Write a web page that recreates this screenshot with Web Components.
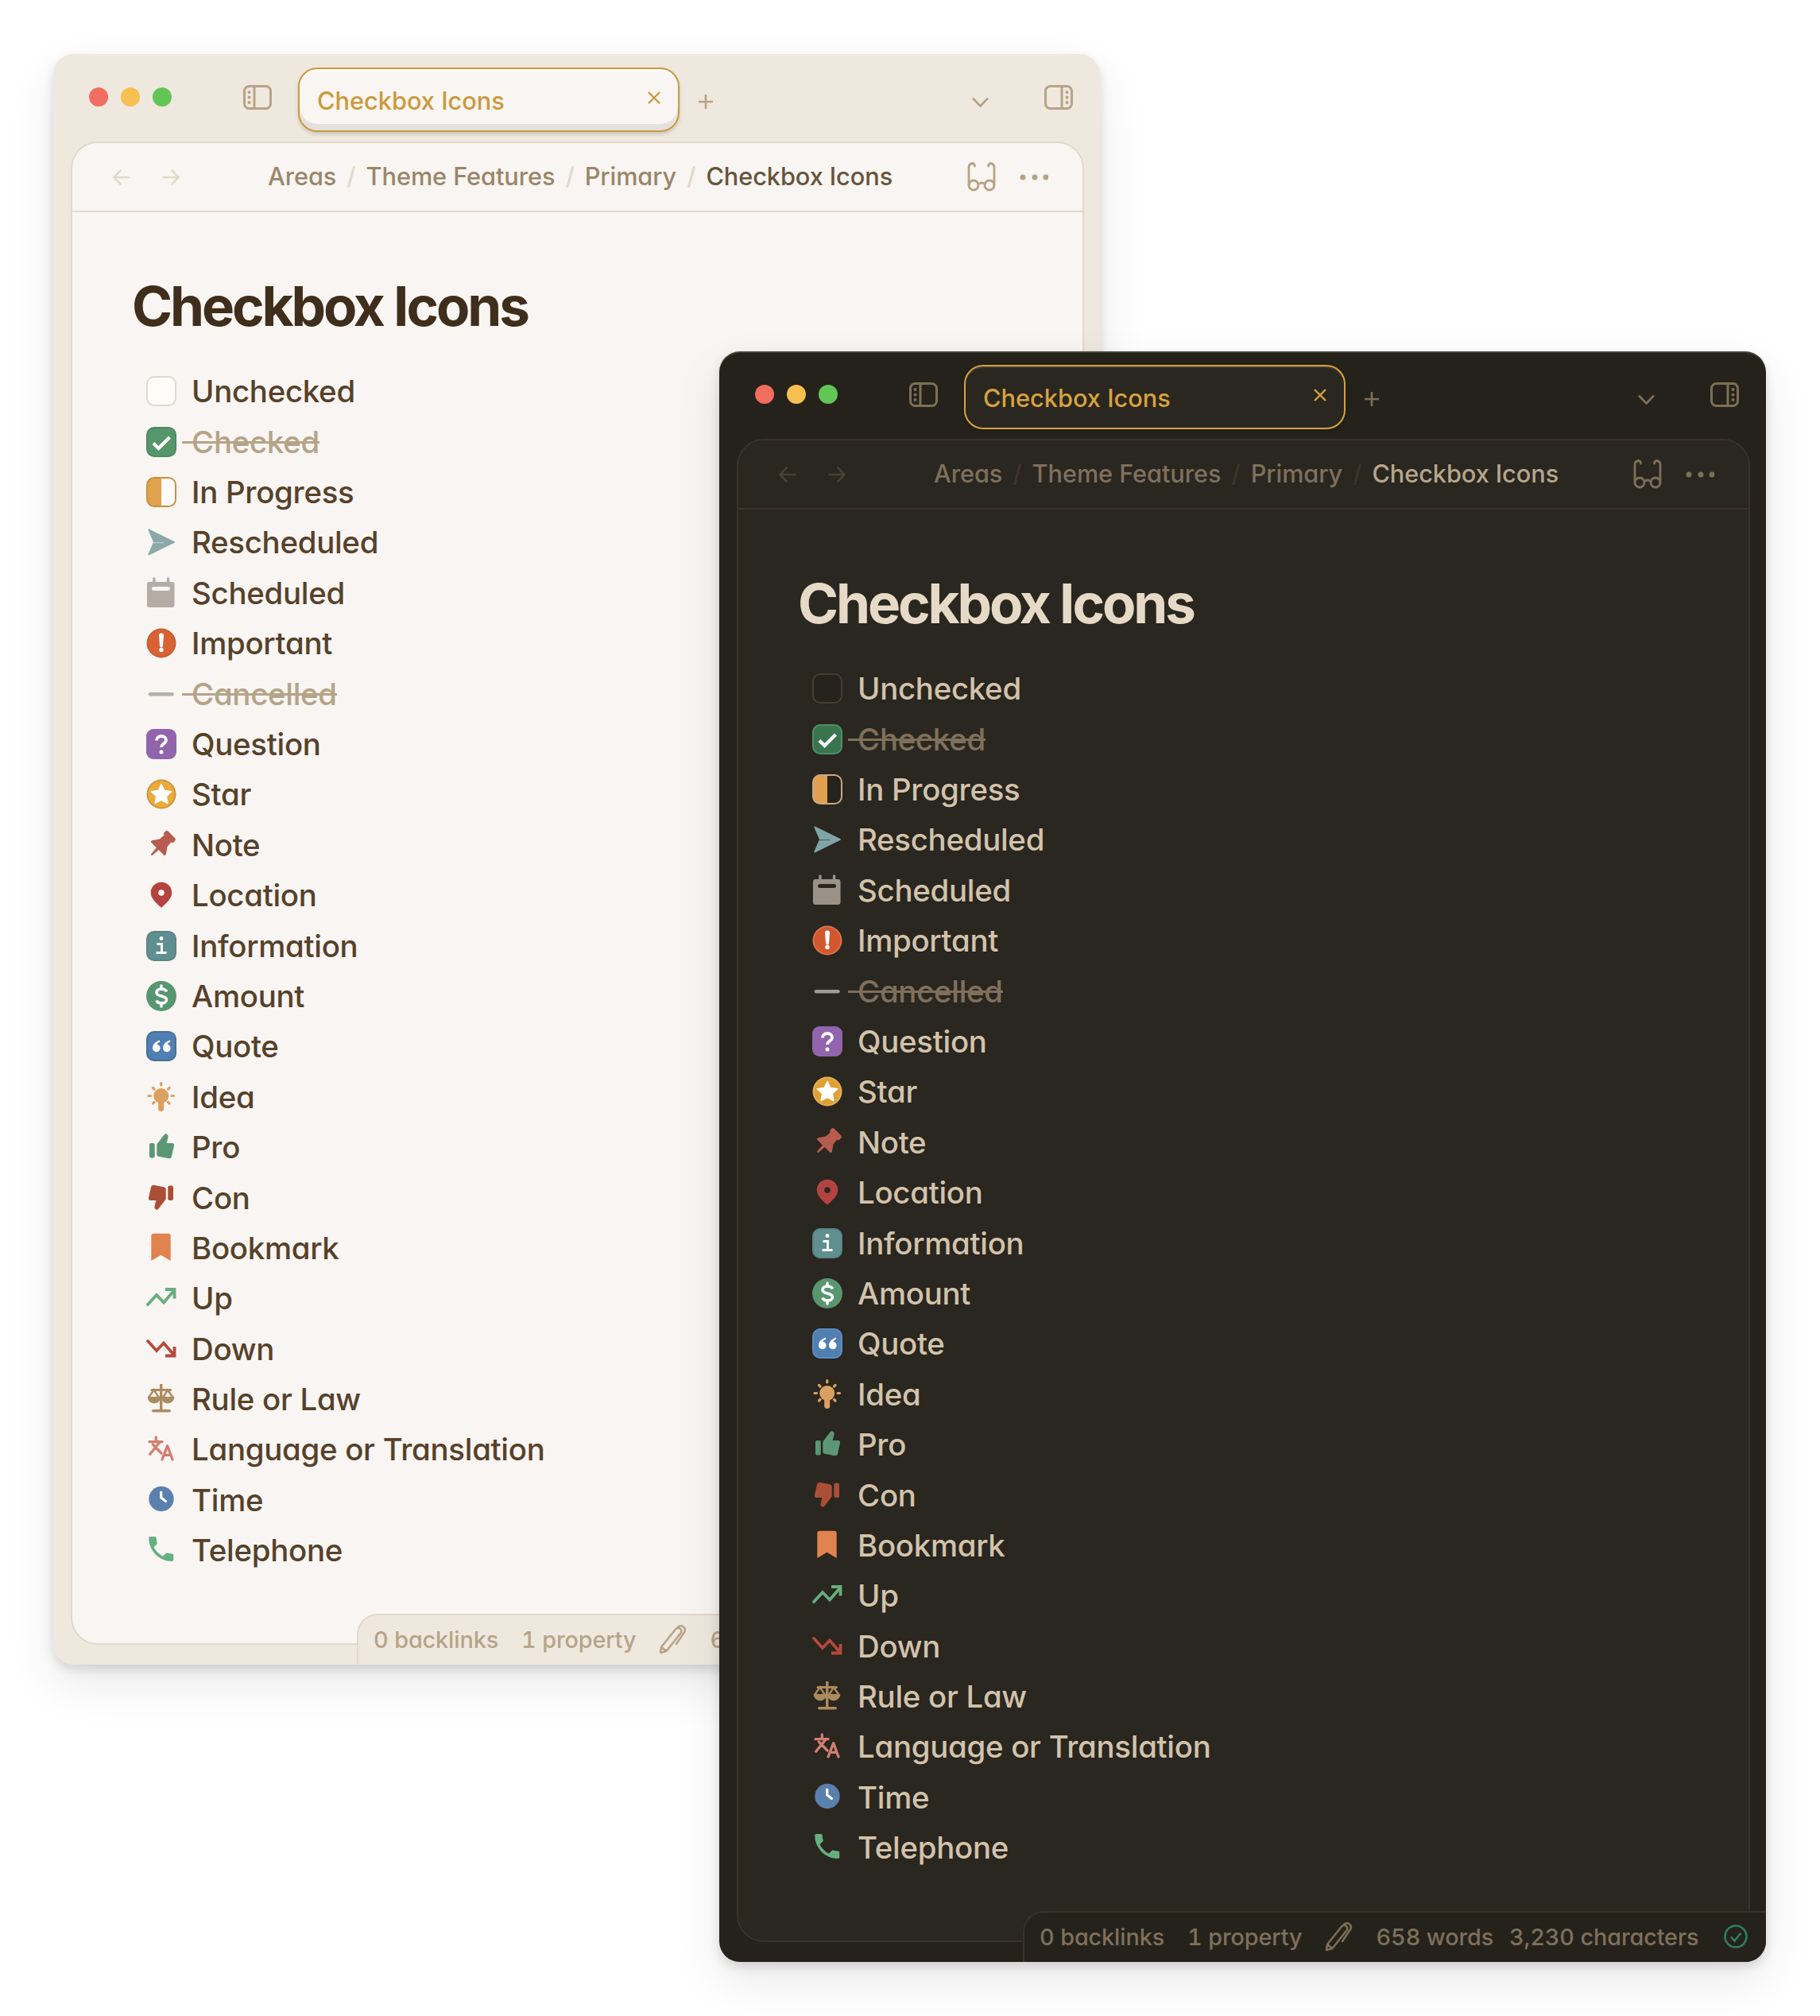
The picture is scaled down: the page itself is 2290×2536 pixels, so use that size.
<!DOCTYPE html>
<html lang="en"><head><meta charset="utf-8"><title>Checkbox Icons</title>
<style>
html,body{margin:0;padding:0;background:#fff}
body{font-family:Inter,"Liberation Sans",sans-serif}
</style></head><body>
<app-desktop>
  <app-window theme="light" style="--x:67px;--y:68px"><note-title>Checkbox Icons</note-title><task-list></task-list></app-window>
  <app-window theme="dark" style="--x:905px;--y:442px"><note-title>Checkbox Icons</note-title><task-list></task-list></app-window>
</app-desktop>
<script>
const U={
side:(flip)=>`<svg width="36" height="31" viewBox="0 0 36 31" fill="none" stroke="currentColor" stroke-width="3"><g ${flip?'transform="matrix(-1 0 0 1 36 0)"':''}><rect x="1.5" y="1.5" width="33" height="28" rx="6"/><path d="M14 1.5v28"/><g fill="currentColor" stroke="none"><circle cx="7.5" cy="9" r="2"/><circle cx="7.5" cy="15.5" r="2"/><circle cx="7.5" cy="22" r="2"/></g></g></svg>`,
close:`<svg width="16" height="16" viewBox="0 0 16 16" fill="none" stroke="currentColor" stroke-width="2.4"><path d="M1 1l14 14M15 1L1 15"/></svg>`,
plus:`<svg width="18" height="18" viewBox="0 0 18 18" fill="none" stroke="currentColor" stroke-width="2.6"><path d="M9 0v18M0 9h18"/></svg>`,
chev:`<svg width="21" height="13" viewBox="0 0 21 13" fill="none" stroke="currentColor" stroke-width="2.6"><path d="M1 1.5l9.5 10 9.5-10"/></svg>`,
back:`<svg width="22" height="20" viewBox="0 0 22 20" fill="none" stroke="currentColor" stroke-width="2.6" stroke-linecap="round" stroke-linejoin="round"><path d="M20.5 10H1.5M9.5 1.5L1.5 10l8 8.5"/></svg>`,
fwd:`<svg width="22" height="20" viewBox="0 0 22 20" fill="none" stroke="currentColor" stroke-width="2.6" stroke-linecap="round" stroke-linejoin="round"><path d="M1.5 10h19M12.5 1.5l8 8.5-8 8.5"/></svg>`,
glasses:`<svg width="36" height="37" viewBox="0 0 36 37" fill="none" stroke="currentColor" stroke-width="2.8" stroke-linecap="round"><circle cx="8" cy="29" r="6"/><circle cx="28" cy="29" r="6"/><path d="M14 27.5q4-3 8 0M2 29V7q0-5 4.5-5.5Q9 1.5 9.5 5M34 29V7q0-5-4.5-5.5Q27 1.5 26.5 5"/></svg>`,
dots:`<svg width="36" height="8" viewBox="0 0 36 8" fill="currentColor"><circle cx="4" cy="4" r="3.5"/><circle cx="19" cy="4" r="3.5"/><circle cx="33" cy="4" r="3.5"/></svg>`,
pencil:`<svg width="36" height="37" viewBox="0 0 36 37" fill="none" stroke="currentColor" stroke-width="2.5" stroke-linejoin="round" stroke-linecap="round"><path d="M2 35l1-7L21 5.5a4 4 0 0 1 6.5 4.8L9.5 33z M3 28l6.5 5M24 2.5q4-2.5 7 0 3 2.8 1.5 6L22 24"/></svg>`,
ok:`<svg width="30" height="30" viewBox="0 0 30 30" fill="none" stroke="#2f7f58" stroke-width="2.6"><circle cx="15" cy="15" r="13.5"/><path d="M9 15.5l4.5 5 8-10"/></svg>`
};
const I={
unchecked:`<rect x="1" y="1" width="36" height="36" rx="9" style="fill:var(--cb-fill);stroke:var(--cb-stroke)" stroke-width="2"/>`,
checked:`<rect x="1" y="1" width="36" height="36" rx="9" style="fill:var(--ok-fill);stroke:var(--ok-stroke)" stroke-width="2"/><path d="M9 20.5l6.5 6.5L29.5 13" fill="none" stroke="#fff" stroke-width="4.2"/>`,
progress:`<rect x="1" y="1" width="36" height="36" rx="9" style="fill:var(--pr-right)"/><path d="M19 1H10a9 9 0 0 0-9 9v18a9 9 0 0 0 9 9h9z" style="fill:var(--pr-fill)"/><rect x="1" y="1" width="36" height="36" rx="9" fill="none" style="stroke:var(--pr-stroke)" stroke-width="2"/>`,
resched:`<path d="M3.5 2.5Q2 2 2.5 4L9 19 2.5 34q-.5 2 1 1.5L35.5 19.7q1-.7 0-1.4z" style="fill:var(--teal)"/><path d="M9 19.6h13" style="stroke:var(--panel)" stroke-width="1.2" opacity=".5"/>`,
sched:`<path d="M8 1a1.8 1.8 0 0 1 3.6 0v4h14.8V1a1.8 1.8 0 0 1 3.6 0v4h3.5a3 3 0 0 1 3 3v26a3 3 0 0 1-3 3H3.5a3 3 0 0 1-3-3V8a3 3 0 0 1 3-3H8z" transform="translate(.5 0) scale(.96 1)" style="fill:var(--cal)"/><rect x="7" y="11" width="23" height="5" rx="2.5" style="fill:var(--panel)"/>`,
important:`<circle cx="19" cy="19" r="18.5" style="fill:var(--imp-b)"/><circle cx="19" cy="19" r="16.7" style="fill:var(--imp)"/><path d="M16 9.5a3 3 0 0 1 6 0l-1 13a2 2 0 0 1-4 0z" fill="#fff"/><circle cx="19" cy="27.5" r="2.7" fill="#fff"/>`,
cancelled:`<rect x="2.7" y="17" width="32" height="4.4" rx="2.2" style="fill:var(--dash)"/>`,
question:`<rect x="0" y="0" width="38" height="38" rx="9" fill="#9164ad"/><path d="M13 14.5c0-3.5 2.7-5.5 6-5.5s6 2 6 5c0 4.5-6 4.5-6 9" fill="none" stroke="#fff" stroke-width="3.8"/><circle cx="19" cy="29" r="2.5" fill="#fff"/>`,
star:`<circle cx="19" cy="19" r="18.5" style="fill:var(--star-b)"/><circle cx="19" cy="19" r="16.7" style="fill:var(--star)"/><path d="M19 6.5l3.9 8 8.8 1.2-6.4 6.1 1.6 8.7L19 26.3l-7.900 4.2 1.600-8.700-6.400-6.100 8.800-1.200z" fill="#fff" stroke="#fff" stroke-width="1.5" stroke-linejoin="round"/>`,
note:`<g transform="translate(-.5 .5) rotate(45 19 19)" fill="#b75c4e"><rect x="10.5" y="0" width="17" height="7" rx="2.5"/><path d="M13 5h12l.8 9.5 5.700 8q.8 2.500-1.500 2.500H8q-2.300 0-1.500-2.500l5.700-8z"/><path d="M17 24h4l-.9 11.500q-1.100 1.500-2.200 0z"/></g>`,
location:`<path fill-rule="evenodd" d="M19 2.7c7.400 0 13.300 5.900 13.300 13.300 0 7-7 13.500-13.300 18.700C12.700 29.500 5.700 23 5.700 16 5.700 8.600 11.600 2.700 19 2.700zm0 9.600a3.800 3.800 0 1 0 0 7.600 3.800 3.800 0 0 0 0-7.600z" fill="#b34340"/>`,
info:`<rect x="1" y="1" width="36" height="36" rx="9" style="fill:#5f8f8e;stroke:var(--in-stroke)" stroke-width="2"/><circle cx="19" cy="9.5" r="2.4" fill="#fff"/><path d="M13.5 16.5H19.5V27.5M12.5 27.5H25.5" fill="none" stroke="#fff" stroke-width="2.8"/>`,
amount:`<circle cx="19" cy="19" r="19" fill="#589670"/><path d="M25.5 13.5C24.5 11 22.300 10 19 10 15.300 10 13 11.800 13 14.500 13 17.500 16 18.300 19 19 22 19.700 25.500 20.500 25.500 23.700 25.500 26.500 22.500 28 19 28 16 28 13.800 27 12.800 24.500" fill="none" stroke="#fff" stroke-width="3.6"/><path d="M19 6v4M19 28v4" stroke="#fff" stroke-width="3.4" stroke-linecap="round"/>`,
quote:`<rect x="1" y="1" width="36" height="36" rx="9" style="fill:#507fb2;stroke:var(--qu-stroke)" stroke-width="2"/><path d="M17 11.5c-5 1.500-9 5-9 10a4.800 4.800 0 1 0 5.500-4.700c.5-1.500 1.800-2.500 3.500-3zM30 11.500c-5 1.500-9 5-9 10a4.800 4.800 0 1 0 5.500-4.700c.5-1.500 1.800-2.500 3.500-3z" fill="#fff"/>`,
idea:`<circle cx="18.7" cy="17.5" r="9.5" fill="#dba060"/><rect x="15.2" y="22" width="7" height="15" rx="3.5" fill="#dba060"/><g stroke="#dba060" stroke-width="3.2" stroke-linecap="round"><path d="M18.7 1.500v2.500M8.500 7.500l1.500 1.500M29 7.500L27.500 9M3 17.500h2.500M32 17.500h2.500M8.500 27l1.500-1.500M29 27l-1.500-1.500"/></g>`,
pro:`<rect x="4" y="14" width="6.7" height="18.5" rx="2" fill="#5c9775"/><path d="M13.3 15.5L22.5 3.500q2-2.200 4.200-.3 1.300 1.300.8 3.300l-1.800 7.500h7q2.800.3 2.300 3.300l-3 13.500q-.5 2.800-3.500 2.500l-13-2.500q-2.200-.5-2.200-2.500z" fill="#5c9775"/>`,
con:`<g transform="rotate(180 19 18.5) translate(0 1)"><rect x="4" y="14" width="6.7" height="18.5" rx="2" fill="#aa4f35"/><path d="M13.3 15.5L22.5 3.500q2-2.200 4.200-.3 1.300 1.300.8 3.300l-1.800 7.500h7q2.800.3 2.300 3.300l-3 13.500q-.5 2.800-3.500 2.500l-13-2.500q-2.200-.5-2.200-2.500z" fill="#aa4f35"/></g>`,
bookmark:`<path d="M6.3 3.800a3 3 0 0 1 3-3h18.400a3 3 0 0 1 3 3V35l-12.200-7.300L6.300 35z" fill="#e0834f"/>`,
up:`<path d="M2 27L13 15l9 9.500L34.500 10" fill="none" stroke="#66ad7e" stroke-width="3.8" stroke-linecap="round"/><path d="M24 8h11.500v11.500" fill="none" stroke="#66ad7e" stroke-width="3.8"/>`,
down:`<path d="M2 9l11 12 9-9.500L34.500 26" fill="none" stroke="#b7493d" stroke-width="3.8" stroke-linecap="round"/><path d="M24 27.5h11.500V16" fill="none" stroke="#b7493d" stroke-width="3.8"/>`,
law:`<g fill="#ab8b5f" stroke="none"><rect x="17" y="0" width="3.4" height="34"/><rect x="7" y="32" width="24" height="3.6" rx="1.8"/><rect x="5.5" y="6" width="26.5" height="3" rx="1.5"/><path d="M1.5 16h17a8.500 8.500 0 0 1-17 0zM18.500 16h17a8.500 8.500 0 0 1-17 0z"/></g><path d="M3 17L9.700 7.500 16 17M21 17l6-9.500L33.500 17" fill="none" stroke="#ab8b5f" stroke-width="2.4"/>`,
lang:`<g fill="none" stroke="#d17e72" stroke-width="3.3" stroke-linecap="round" stroke-linejoin="round"><path d="M12.3 4v5.700M4 9.700h16M17.300 9.700L4.700 25.300M8.300 13L19 24M20 32L26.700 14.700 33 32M22.300 26.300h8.400"/></g>`,
time:`<circle cx="19" cy="17.5" r="15.7" fill="#5a80ae"/><path d="M18.7 9v7l5.800 4.500" fill="none" stroke="#fff" stroke-width="3.2" stroke-linecap="round" stroke-linejoin="round"/>`,
tel:`<path transform="translate(-1.9 -3.2) scale(1.72)" fill="#66b07f" d="M6.620 10.790c1.440 2.830 3.760 5.140 6.590 6.590l2.200-2.200c.27-.27.67-.36 1.020-.24 1.120.37 2.330.57 3.570.57.55 0 1 .45 1 1V20c0 .55-.45 1-1 1-9.390 0-17-7.610-17-17 0-.55.45-1 1-1h3.500c.55 0 1 .45 1 1 0 1.250.2 2.450.57 3.570.11.35.03.74-.25 1.020l-2.200 2.200z"/>`
};
const ROWS=[["unchecked","Unchecked"],["checked","Checked",1],["progress","In Progress"],["resched","Rescheduled"],["sched","Scheduled"],["important","Important"],["cancelled","Cancelled",1],["question","Question"],["star","Star"],["note","Note"],["location","Location"],["info","Information"],["amount","Amount"],["quote","Quote"],["idea","Idea"],["pro","Pro"],["con","Con"],["bookmark","Bookmark"],["up","Up"],["down","Down"],["law","Rule or Law"],["lang","Language or Translation"],["time","Time"],["tel","Telephone"]];

class AppDesktop extends HTMLElement{constructor(){super();this.attachShadow({mode:"open"}).innerHTML=`<style>:host{display:block;position:relative;width:2290px;height:2536px;overflow:hidden;background:#fff}</style><slot></slot>`}}
class AppWindow extends HTMLElement{constructor(){super();this.attachShadow({mode:"open"}).innerHTML=`<style>
:host{position:absolute;left:var(--x);top:var(--y);width:1317px;height:2026px;box-sizing:border-box;display:flex;flex-direction:column;padding:0 20px 25px 22px;overflow:hidden;border-radius:26px;
 font-family:Inter,"Liberation Sans",sans-serif;font-feature-settings:"cv11" 1;background:var(--frame);color:var(--text);
 box-shadow:0 6px 14px rgba(0,0,0,.13),0 24px 60px rgba(0,0,0,.09)}
:host([theme=light]){--frame:#efe8df;--panel:#f8f5f2;--line:#e3d9c9;--text:#56412a;--heading:#3f2e1c;--muted:#b5a488;--crumb:#9a8669;--crumb-last:#66543b;--slash:#e3d9c9;--arrow:#e3d9c9;--chrome:#b7a386;--gold:#cb9a3c;--tab:#f8f5f2;--tab-in:inset 0 -8px 0 #e4e1dd,inset 0 3px 0 #fff;
 --cb-fill:#fdfcfa;--cb-stroke:#e3d9c9;--ok-fill:#56966b;--ok-stroke:#4c8a61;--pr-right:#fcfbf9;--pr-fill:#e0a24d;--pr-stroke:#c8903f;--teal:#8aa9a8;--cal:#b4aca5;--dash:#b8afa6;--in-stroke:#5a8585;--qu-stroke:#466f9c;--imp:#d96234;--imp-b:#c75a30;--star:#eaaa3c;--star-b:#c9953a}
:host([theme=dark]){--frame:#25221b;--panel:#2a2620;--line:#3b3226;--text:#d2c3ab;--heading:#e6dac7;--muted:#7f705b;--crumb:#7f705b;--crumb-last:#b5a68c;--slash:#3f3528;--arrow:#4a4033;--chrome:#7f6f57;--gold:#d6a33f;--tab:#2a2620;--tab-in:inset 0 2px 0 #403b34;
 --cb-fill:#26221c;--cb-stroke:#4a3d2e;--ok-fill:#39744f;--ok-stroke:#4f8f66;--pr-right:#26221c;--pr-fill:#e0a050;--pr-stroke:#c8aa80;--teal:#7fa5a8;--cal:#9b9287;--dash:#9f9a92;--in-stroke:#5a8585;--qu-stroke:#5d8cc0;--imp:#d0582c;--imp-b:#dd7550;--star:#dfa036;--star-b:#e8b254;
 box-shadow:inset 0 2px 0 rgba(255,255,255,.14),0 6px 14px rgba(0,0,0,.13),0 24px 60px rgba(0,0,0,.09)}
:host([theme=light]) .far{visibility:hidden}
.bar{flex:none;height:110px;display:flex;align-items:center;color:var(--chrome);margin-right:-20px;margin-left:-22px;box-sizing:border-box;padding-left:45px}
.l{width:24px;height:24px;border-radius:50%;margin-right:16px;margin-top:-2px}
.side{display:flex;margin-left:90px;margin-top:-2px}
.tab{box-sizing:border-box;margin-left:33px;margin-top:5px;width:480px;height:81px;border:2px solid var(--gold);border-radius:24px;background:var(--tab);box-shadow:var(--tab-in),0 3px 5px rgba(0,0,0,.14);color:var(--gold);display:flex;align-items:center;justify-content:space-between;padding:2px 22px 0 22px;font-size:30.72px;font-weight:450}
.tab svg{display:block;margin-top:-8px}
.plus{display:flex;margin-left:24px;margin-top:10px}
.chev{display:flex;margin-left:auto;margin-top:10px}
.side2{display:flex;margin-left:70px;margin-right:34px;margin-top:-2px}
.panel{flex:1;min-height:0;display:flex;flex-direction:column;background:var(--panel);border:2px solid var(--line);border-radius:34px 34px 0 34px}
.head{flex:none;height:85px;border-bottom:2px solid var(--line);display:flex;align-items:center;padding-left:51px;color:var(--arrow)}
.head svg{display:block}
.fwd{margin-left:40px}
.crumbs{margin-left:111px;display:flex;align-items:center;font-size:30.72px;font-weight:450;letter-spacing:-.08px;color:var(--crumb);white-space:nowrap;padding-bottom:2px}
.crumbs i{font-style:normal;color:var(--slash);margin:0 13px}
.crumbs b{font-weight:450;color:var(--crumb-last)}
.acts{margin-left:auto;display:flex;align-items:center;color:var(--chrome);padding-right:43px;gap:30px}
.body{flex:1;padding:73px 0 0 75px}
.status{position:absolute;right:0;bottom:0;width:935px;height:64px;box-sizing:border-box;background:var(--frame);border:2px solid var(--line);border-width:2px 0 0 2px;border-top-left-radius:26px;display:flex;align-items:center;padding:0 0 2px 19px;font-size:28.8px;font-weight:450;font-feature-settings:"cv11" 1,"tnum" 1;letter-spacing:-.1px;color:var(--muted);white-space:nowrap}
.status span{display:block}
.status svg{display:block;flex:none}
</style>
<div class="bar">
 <div class="l" style="background:#f16d5f"></div><div class="l" style="background:#f6bf4f"></div><div class="l" style="background:#62c655;margin-right:0"></div>
 <div class="side">${U.side(0)}</div>
 <div class="tab"><span>Checkbox Icons</span>${U.close}</div>
 <div class="plus">${U.plus}</div>
 <div class="chev">${U.chev}</div>
 <div class="side2">${U.side(1)}</div>
</div>
<div class="panel">
 <div class="head">${U.back}<div class="fwd">${U.fwd}</div>
  <div class="crumbs"><span>Areas</span><i>/</i><span>Theme Features</span><i>/</i><span>Primary</span><i>/</i><b>Checkbox Icons</b></div>
  <div class="acts">${U.glasses}${U.dots}</div>
 </div>
 <div class="body"><slot></slot></div>
</div>
<div class="status"><span>0 backlinks</span><span style="margin-left:29px">1 property</span><span style="margin-left:28px;display:flex;color:var(--chrome)">${U.pencil}</span><span style="margin-left:29px">658 words</span><span class="far" style="margin-left:20px">3,230 characters</span><span class="far" style="margin-left:32px;display:flex">${U.ok}</span></div>`}}
class NoteTitle extends HTMLElement{constructor(){super();this.attachShadow({mode:"open"}).innerHTML=`<style>:host{display:block;font-size:69.12px;font-weight:700;line-height:90px;letter-spacing:-.045em;color:var(--heading);font-family:Inter,"Liberation Sans",sans-serif;font-feature-settings:normal}</style><slot></slot>`}}
class TaskList extends HTMLElement{constructor(){super();const s=this.attachShadow({mode:"open"});s.innerHTML=`<style>:host{display:flex;flex-direction:column;margin-top:30.6px;padding-left:18px}</style>`;
 for(const [k,t,d] of ROWS){const r=document.createElement("task-row");r.setAttribute("icon",k);if(d)r.setAttribute("done","");r.textContent=t;s.appendChild(r)}}}
class TaskRow extends HTMLElement{constructor(){super();this.attachShadow({mode:"open"}).innerHTML=`<style>
:host{display:flex;align-items:center;height:63.4px;font-size:38.4px;font-weight:450;letter-spacing:-.28px;color:var(--text);white-space:nowrap}
svg{flex:none;display:block;width:38px;height:38px;overflow:visible;margin-right:19px}
.t{position:relative}
:host([done]) .t{color:var(--muted)}
:host([done]) .t::after{content:"";position:absolute;left:-12px;right:0;top:50%;height:3px;margin-top:-1px;background:var(--muted)}
</style><svg viewBox="0 0 38 38"></svg><span class="t"><slot></slot></span>`}
 connectedCallback(){this.shadowRoot.querySelector("svg").innerHTML=I[this.getAttribute("icon")]||""}}
customElements.define("app-desktop",AppDesktop);customElements.define("app-window",AppWindow);customElements.define("note-title",NoteTitle);customElements.define("task-list",TaskList);customElements.define("task-row",TaskRow);
</script>
</body></html>
